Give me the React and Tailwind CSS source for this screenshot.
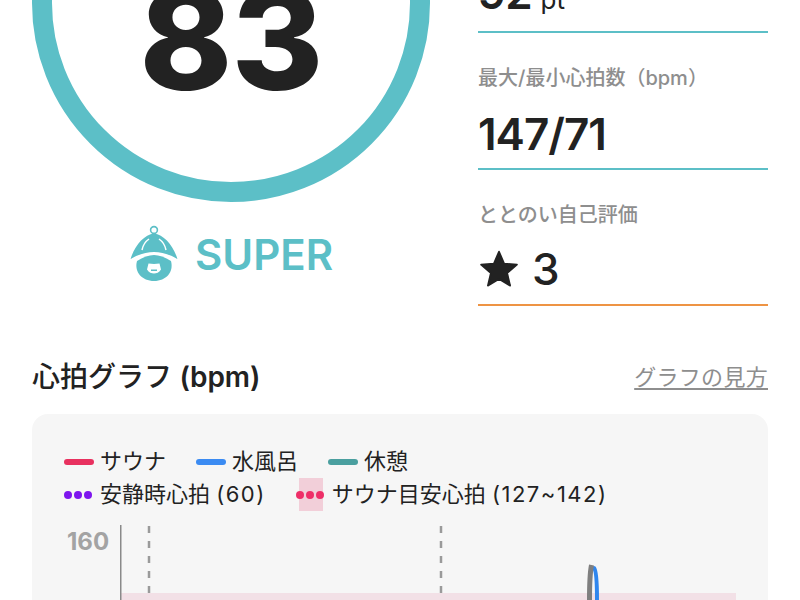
function Field({ label, children, line = "bg-[#5cbfc7]", className = "", valueClass = "mt-[12px]", lineClass = "mt-[7px]" }) {
  return (
    <div className={`flex flex-col ${className}`}>
      <div className="h-[28px] text-[20px] leading-[28px] font-medium text-[#8e8e8e]">{label}</div>
      <div className={`h-[56px] flex items-center text-[44px] leading-[56px] text-[#222222] ${valueClass}`}>{children}</div>
      <div className={`h-[2px] ${lineClass} ${line}`} />
    </div>
  );
}

function Mascot() {
  return (
    <svg width="50" height="58" viewBox="128 225 50 58" className="mb-[4px]" aria-hidden="true">
      <circle cx="153" cy="231" r="3.4" fill="none" stroke="#5cbfc7" strokeWidth="1.6" />
      <path d="M129.500 260C134 246 143 236 153 234.500C163 236 172 246 176.500 260C168 255 160 253 153 253C146 253 138 255 129.500 260z" fill="#5cbfc7" />
      <path d="M141 251c1-5 4-9 7-11M165 251c-1-5-4-9-7-11" fill="none" stroke="#fff" strokeWidth="1.500" />
      <path d="M136 262C142 258 148 256 153 256C158 256 164 258 170 262C173 273 165 282 153 282C141 282 133 273 136 262z" fill="#5cbfc7" />
      <path d="M147.500 264.500c4 .6 7 .6 11 0l1.500 6c-2 3-4.500 4-7 4s-5-1-7-4z" fill="#fff" />
      <rect x="150" y="270.500" width="6" height="1.500" fill="#5cbfc7" />
    </svg>
  );
}

function Bar({ color, label, className = "" }) {
  return (
    <div className={`flex items-center ${className}`}>
      <span className={`h-[6px] w-[30px] rounded-full ${color}`} />
      <span className="ml-[6px]">{label}</span>
    </div>
  );
}

function Dots({ color }) {
  return (
    <span className="flex w-[28px] justify-between">
      <span className={`size-[8px] rounded-full ${color}`} />
      <span className={`size-[8px] rounded-full ${color}`} />
      <span className={`size-[8px] rounded-full ${color}`} />
    </span>
  );
}

export default function App() {
  return (
    <div className="relative h-[600px] w-[800px] overflow-hidden bg-white font-[Inter,'Noto_Sans_CJK_JP',sans-serif] text-[#222222]">
      <div className="-mt-[196px] flex px-[32px]">
        <div className="w-[398px] shrink-0 flex flex-col items-center">
          <div className="flex size-[398px] items-start justify-center rounded-full border-[20px] border-[#5cbfc7]">
            <div className="mt-[136px] text-[140px] leading-[158px] font-extrabold tracking-[-1px] text-[#222222]">83</div>
          </div>
          <div className="mt-[22px] flex items-center gap-[16px]">
            <Mascot />
            <span className="text-[42px] leading-[58px] font-semibold text-[#5cbfc7]">SUPER</span>
          </div>
        </div>
        <div className="ml-[48px] flex-1 pt-[92px]">
          <div className="flex h-[137px] flex-col justify-end">
            <div className="flex items-baseline text-[44px] leading-[56px] font-semibold tracking-[-1px] text-[#222222]">
              92<span className="ml-[9px] text-[26px] font-normal tracking-normal">pt</span>
            </div>
            <div className="mt-[3px] h-[2px] bg-[#5cbfc7]" />
          </div>
          <Field label="最大/最小心拍数（bpm）" className="mt-[31px]" valueClass="mt-[14px]" lineClass="mt-[6px]">
            <span className="font-semibold tracking-[-1px]">147/71</span>
          </Field>
          <Field label="ととのい自己評価" line="bg-[#ee9444]" className="mt-[31px]">
            <svg width="40" height="40" viewBox="0 0 24 24" className="mr-[13px] ml-[1px]" aria-hidden="true">
              <path d="M12 1.500l3.100 7.200 7.700.7-5.900 5 1.800 7.600L12 18l-6.700 4 1.800-7.600-5.900-5 7.700-.7z" fill="#222222" stroke="#222222" strokeWidth="1" strokeLinejoin="round" />
            </svg>
            <span className="font-medium">3</span>
          </Field>
        </div>
      </div>

      <div className="absolute left-0 right-0 top-[355px] px-[32px]">
        <div className="flex items-center justify-between h-[44px]">
          <div className="text-[28px] leading-[44px] font-medium">心拍グラフ <span className="font-semibold">(bpm)</span></div>
          <a className="text-[22px] leading-[32px] tracking-[0.3px] text-[#8e8e8e] underline underline-offset-[3px]">グラフの見方</a>
        </div>
        <div className="mt-[15px] rounded-t-[16px] bg-[#f6f6f6] pt-[31px] pl-[32px] h-[300px]">
          <div className="flex h-[33px] items-center text-[22px] leading-[33px]">
            <Bar color="bg-[#e8315f]" label="サウナ" />
            <Bar color="bg-[#3b8bf2]" label="水風呂" className="ml-[30px]" />
            <Bar color="bg-[#4a9f9f]" label="休憩" className="ml-[30px]" />
          </div>
          <div className="flex h-[33px] items-center text-[22px] leading-[33px]">
            <Dots color="bg-[#7e16ee]" />
            <span className="ml-[8px]">安静時心拍 <span className="tracking-[1.5px]">(60)</span></span>
            <span className="relative ml-[30px] flex h-[33px] w-[28px] items-center">
              <span className="absolute left-[3px] top-0 h-[33px] w-[24px] bg-[#f2cfd9]" />
              <span className="relative"><Dots color="bg-[#ee2f68]" /></span>
            </span>
            <span className="ml-[8px]">サウナ目安心拍 <span className="tracking-[1.500px]">(127~142)</span></span>
          </div>
          <div className="mt-[14px] flex">
            <div className="w-[56px] pl-[3px] pt-px text-[24px] leading-[32px] font-bold text-[#a3a3a3]">160</div>
            <svg width="616" height="100" viewBox="120 525 616 100" aria-hidden="true">
              <rect x="121" y="593" width="615" height="32" fill="#f2e0e6" />
              <line x1="120.500" y1="525" x2="120.500" y2="625" stroke="#8a8a8a" strokeWidth="2" />
              <line x1="149" y1="526" x2="149" y2="625" stroke="#9a9a9a" strokeWidth="2.500" strokeDasharray="7 8" />
              <line x1="441" y1="526" x2="441" y2="625" stroke="#9a9a9a" strokeWidth="2.500" strokeDasharray="7 8" />
              <path d="M594 568c2 2 3 15 3 32" fill="none" stroke="#2f86ee" strokeWidth="4" strokeLinecap="round" />
              <path d="M589.500 600c0-15 1-30 2-35" fill="none" stroke="#7f7f7f" strokeWidth="5" />
            </svg>
          </div>
        </div>
      </div>
    </div>
  );
}
